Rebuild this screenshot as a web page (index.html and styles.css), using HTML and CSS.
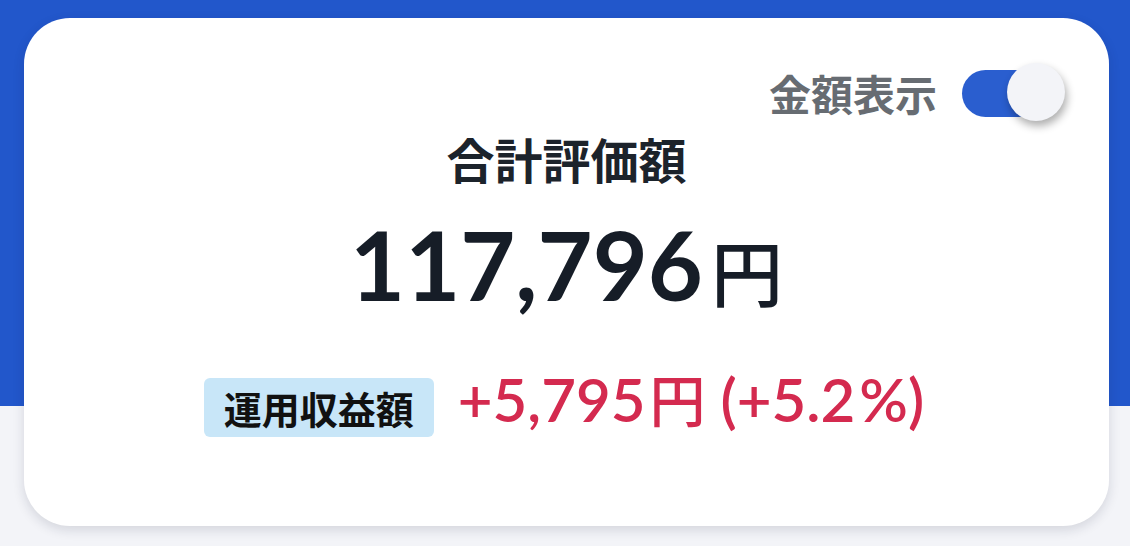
FILE: index.html
```html
<!DOCTYPE html>
<html lang="ja">
<head>
<meta charset="utf-8">
<title>合計評価額</title>
<link rel="stylesheet" href="styles.css">
</head>
<body>
<main class="page">
  <section class="card">
    <div class="top-row">
      <span class="toggle-label">金額表示</span>
      <span class="toggle" role="switch" aria-checked="true">
        <span class="toggle-track"></span>
        <span class="toggle-knob"></span>
      </span>
    </div>
    <h1 class="title">合計評価額</h1>
    <div class="total"><span class="total-num">117,796</span><span class="total-yen">円</span></div>
    <div class="gain-row">
      <span class="badge">運用収益額</span>
      <span class="gain"><span class="gain-num">+5,795</span><span class="gain-yen">円</span><span class="gain-num"> (+5.2<span class="pct">%</span>)</span></span>
    </div>
  </section>
</main>
</body>
</html>
```
FILE: styles.css
```css
html, body {
  margin: 0;
  padding: 0;
}
body {
  width: 1130px;
  height: 546px;
  overflow: hidden;
  background: linear-gradient(to bottom, #2257cb 0, #2257cb 406px, #f3f4f8 406px, #f3f4f8 100%);
  font-family: "Noto Sans CJK JP", "Noto Sans", sans-serif;
}
.page {
  padding: 18px 21px 0 24px;
}
.card {
  box-sizing: border-box;
  width: 1085px;
  height: 508px;
  background: #ffffff;
  border-radius: 46px;
  box-shadow: 0 4px 12px rgba(20, 30, 60, 0.14);
  padding: 45px 44px 0 44px;
  display: flex;
  flex-direction: column;
  align-items: center;
}
.top-row {
  align-self: stretch;
  height: 60px;
  display: flex;
  justify-content: flex-end;
  align-items: center;
  gap: 25px;
}
.toggle-label {
  font-size: 42px;
  line-height: 60px;
  font-weight: 700;
  color: #676c72;
}
.toggle {
  position: relative;
  width: 103px;
  height: 60px;
  display: flex;
  align-items: center;
}
.toggle-track {
  width: 80px;
  height: 47px;
  border-radius: 24px;
  background: #2a5ecf;
}
.toggle-knob {
  position: absolute;
  right: 0;
  top: 0;
  width: 58px;
  height: 58px;
  border-radius: 50%;
  background: #f3f4f8;
  box-shadow: 2px 5px 8px rgba(0, 0, 0, 0.32);
}
.title {
  margin: 7px 0 0 0;
  font-size: 48px;
  line-height: 56px;
  font-weight: 700;
  color: #1c232b;
}
.total {
  margin-top: 23px;
  height: 110px;
  line-height: 110px;
  color: #161d27;
  white-space: nowrap;
}
.total-num {
  font-family: "Lato", "Noto Sans", sans-serif;
  font-size: 95px;
  font-weight: 700;
}
.total-yen {
  font-size: 72px;
  font-weight: 500;
  line-height: 1;
  margin-left: 8px;
}
.gain-row {
  margin-top: 45px;
  display: flex;
  align-items: center;
  gap: 24px;
  padding-right: 5px;
}
.badge {
  box-sizing: border-box;
  height: 59px;
  padding: 0 20px;
  background: #c8e6f8;
  border-radius: 6px;
  font-size: 38px;
  line-height: 59px;
  font-weight: 700;
  color: #111111;
}
.gain {
  color: #d42a4f;
  white-space: nowrap;
  line-height: 70px;
}
.gain-num {
  font-family: "Lato", "Noto Sans", sans-serif;
  font-size: 60px;
  font-weight: 600;
  white-space: pre;
}
.pct {
  margin-left: 4px;
}
.gain-yen {
  font-size: 56px;
  font-weight: 500;
  line-height: 1;
  margin-left: 4px;
}
```
